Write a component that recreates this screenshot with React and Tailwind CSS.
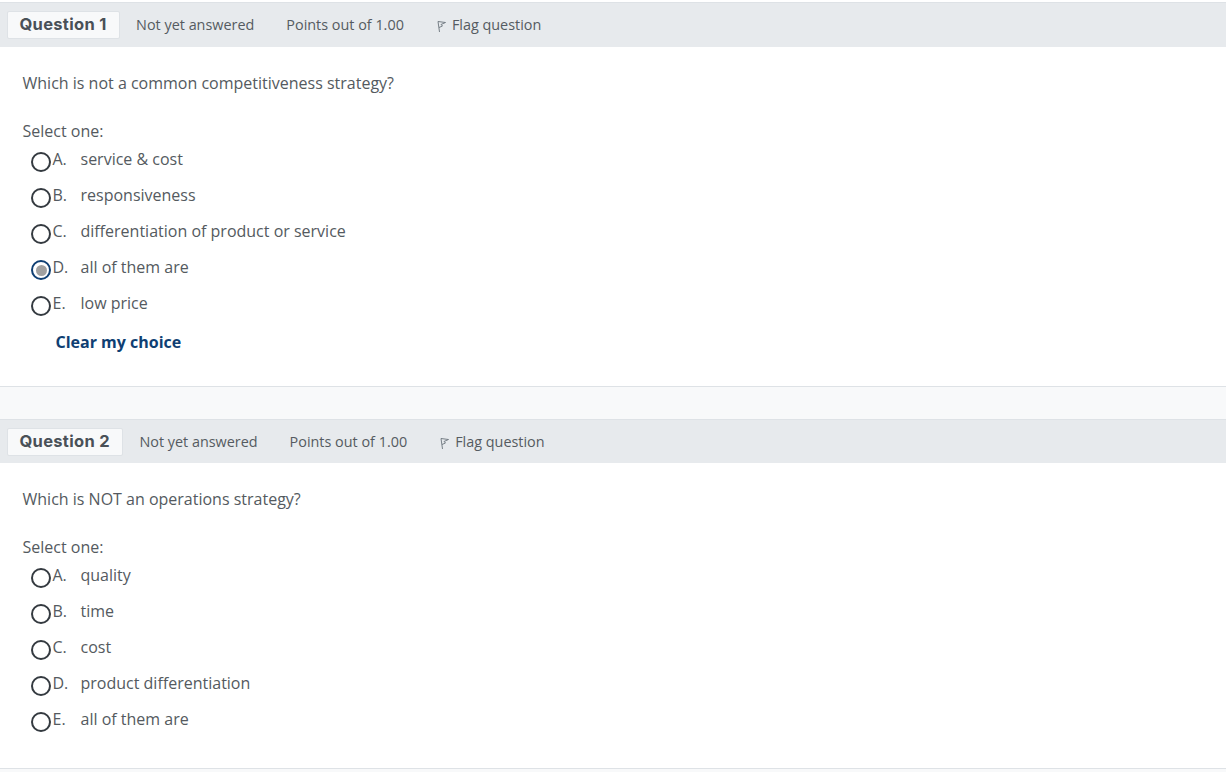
const sans = "font-['Open_Sans',sans-serif]";

function Flag() {
  return (
    <svg width="9" height="14" viewBox="0 0 9 14" className="mr-[6px] mt-[5px] shrink-0" fill="none">
      <path d="M2.5 13 L1 2.5 L8.5 3.5 L4 5.5 L5.5 7 L2 8.5" stroke="#6a737b" strokeWidth="0.9" strokeLinejoin="round" />
    </svg>
  );
}

function Radio({ checked }) {
  return (
    <span className={`w-[20px] h-[20px] rounded-full border-[2px] shrink-0 flex items-center justify-center mt-[5px] ${checked ? "border-[#0f3f73]" : "border-[#343a40]"}`}>
      {checked && <span className="w-[11px] h-[11px] rounded-full bg-[#a0a0a0]" />}
    </span>
  );
}

function Option({ letter, text, checked }) {
  return (
    <div className="flex h-[36px] pl-[31px]">
      <Radio checked={checked} />
      <span className="ml-[1.5px] w-[28px] leading-[24px] text-[16px]">{letter}</span>
      <span className="leading-[24px] text-[16px]">{text}</span>
    </div>
  );
}

function Header({ n, tall }) {
  return (
    <div className={`${tall ? "h-[45px]" : "h-[44px]"} bg-[#e7eaed] border-t border-[#dee2e6] flex items-start pl-[7px] text-[14.4px] text-[#555b61]`}>
      <div className="mt-[8px] h-[28px] pb-[1px] pl-[11.5px] pr-[12.5px] bg-[#f8f9fa] border border-[#dee2e6] rounded-[2px] flex items-center font-['Inter',sans-serif] font-bold text-[16.5px] tracking-[0.3px] text-[#495057]">
        Question {n}
      </div>
      <span className="mt-[11px] ml-[16px] leading-[21px]">Not yet answered</span>
      <span className="mt-[11px] ml-[32px] leading-[21px]">Points out of 1.00</span>
      <span className="mt-[11px] ml-[33px] leading-[21px] flex"><Flag />Flag question</span>
    </div>
  );
}

function Question({ n, prompt, options, clear }) {
  return (
    <div>
      <Header n={n} tall={clear} />
      <div className={`bg-white pl-[22.5px] pt-[24px] border-b border-[#dee2e6] ${clear ? "pb-[32px]" : "pb-[25px]"}`}>
        <p className="text-[16px] leading-[24px]">{prompt}</p>
        <p className="mt-[24px] text-[16px] leading-[24px]">Select one:</p>
        <div className="-ml-[22.5px] mt-[4px]">
          {options.map((o) => (
            <Option key={o[0]} letter={o[0]} text={o[1]} checked={o[2]} />
          ))}
        </div>
        {clear && (
          <div className="ml-[33px] mt-[3px] text-[16px] leading-[24px] font-bold text-[#0f3f73]">Clear my choice</div>
        )}
      </div>
    </div>
  );
}

export default function App() {
  return (
    <div className={`${sans} w-[1226px] h-[772px] overflow-hidden bg-white text-[#545a60]`}>
      <div className="h-[2px]" />
      <Question
        n={1}
        clear
        prompt="Which is not a common competitiveness strategy?"
        options={[
          ["A.", "service & cost"],
          ["B.", "responsiveness"],
          ["C.", "differentiation of product or service"],
          ["D.", "all of them are", true],
          ["E.", "low price"],
        ]}
      />
      <div className="h-[32px] bg-[#f8f9fa]" />
      <Question
        n={2}
        prompt="Which is NOT an operations strategy?"
        options={[
          ["A.", "quality"],
          ["B.", "time"],
          ["C.", "cost"],
          ["D.", "product differentiation"],
          ["E.", "all of them are"],
        ]}
      />
      <div className="h-[4px] bg-[#f8f9fa]" />
    </div>
  );
}
